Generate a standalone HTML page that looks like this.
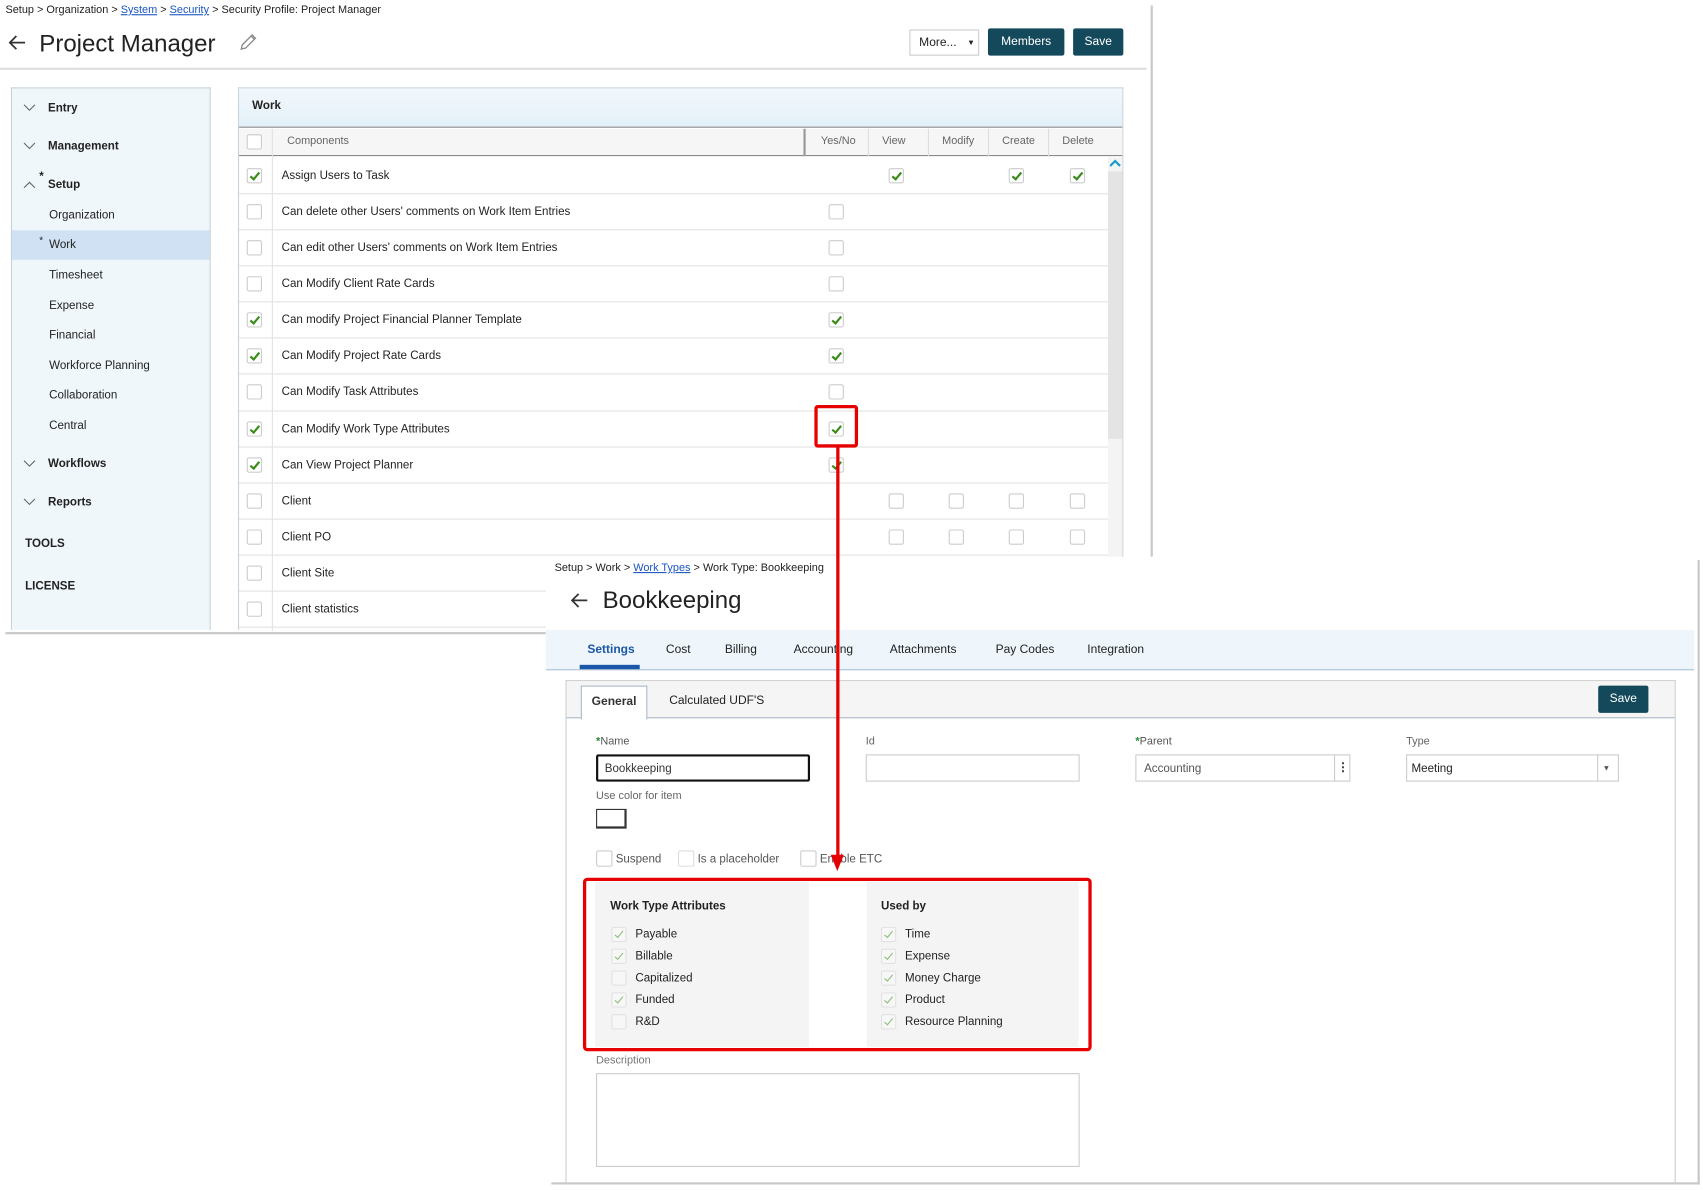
<!DOCTYPE html>
<html><head><meta charset="utf-8">
<style>
*{box-sizing:border-box;margin:0;padding:0}
html,body{width:1703px;height:1190px;overflow:hidden;background:#fff}
#w{position:absolute;left:0;top:0;width:1560px;height:1090px;transform:scale(1.09167);transform-origin:0 0;font-family:"Liberation Sans",sans-serif;color:#222;font-size:10.6px}
.a{position:absolute}
.t{position:absolute;white-space:nowrap;line-height:14px}
.cb{position:absolute;width:14px;height:14px;border:1px solid #ccc;border-radius:2px;background:#fff}
.cb.k::after{content:"";position:absolute;left:4px;top:1px;width:3px;height:7px;border:solid #3c8c1c;border-width:0 2px 2px 0;transform:rotate(40deg)}
.cb.l{background:#f7f7f7;border-color:#e2e2e2}
.cb.l.k::after{border-color:#8cbf7a;border-width:0 1.5px 1.5px 0}
.btn{position:absolute;background:#14495c;color:#fff;text-align:center;border-radius:2px;font-size:11px}
.hl{position:absolute;height:1px;background:#e2e2e2}
.ch{position:absolute}
a{color:#1a55c4;text-decoration:underline}
</style></head><body><div id="w">
<div class="a" style="left:1054px;top:5px;width:2px;height:505px;background:#c8c8c8"></div>
<div class="a" style="left:5px;top:579px;width:495px;height:2px;background:#c8c8c8"></div>
<div class="t" style="left:5px;top:3px;font-size:10px">Setup &gt; Organization &gt; <a>System</a> &gt; <a>Security</a> &gt; Security Profile: Project Manager</div>
<svg class="a" style="left:8px;top:32px" width="16" height="14" viewBox="0 0 16 14"><path d="M15 7H2M7 1L1 7L7 13" fill="none" stroke="#333" stroke-width="1.6"/></svg>
<div class="t" style="left:36px;top:26px;font-size:22px;line-height:28px;color:#222">Project Manager</div>
<svg class="a" style="left:218px;top:30px" width="18" height="18" viewBox="0 0 18 18"><path d="M3 15 L4 11 L13 2 L16 5 L7 14 Z M12 3 L15 6" fill="none" stroke="#888" stroke-width="1.2"/></svg>
<div class="a" style="left:833px;top:27px;width:64px;height:24px;border:1px solid #ccc;background:#fff"></div>
<div class="t" style="left:842px;top:32px;font-size:11px">More...</div>
<div class="t" style="left:886px;top:33px;font-size:7px">&#9660;</div>
<div class="btn" style="left:905px;top:26px;width:70px;height:25px;line-height:25px">Members</div>
<div class="btn" style="left:983px;top:26px;width:46px;height:25px;line-height:25px">Save</div>
<div class="a" style="left:0;top:62px;width:1050px;height:2px;background:#ddd"></div>
<div class="a" style="left:10px;top:80px;width:183px;height:497px;background:#f0f7fb;border:1px solid #c8d2da;border-bottom:none"></div>
<div class="a" style="left:11px;top:211px;width:181px;height:27px;background:#cfe1f3"></div>
<svg class="ch" style="left:21px;top:95px" width="12" height="8"><path d="M1 1L6 6L11 1" fill="none" stroke="#666"/></svg><div class="t" style="left:44px;top:92px;font-weight:bold">Entry</div>
<svg class="ch" style="left:21px;top:130px" width="12" height="8"><path d="M1 1L6 6L11 1" fill="none" stroke="#666"/></svg><div class="t" style="left:44px;top:127px;font-weight:bold">Management</div>
<svg class="ch" style="left:21px;top:165px" width="12" height="8"><path d="M1 7L6 2L11 7" fill="none" stroke="#666"/></svg><div class="t" style="left:36px;top:155px;font-weight:bold">*</div><div class="t" style="left:44px;top:162px;font-weight:bold">Setup</div>
<div class="t" style="left:45px;top:190px">Organization</div>
<div class="t" style="left:36px;top:213px;font-size:9px">*</div><div class="t" style="left:45px;top:217px">Work</div>
<div class="t" style="left:45px;top:245px">Timesheet</div>
<div class="t" style="left:45px;top:273px">Expense</div>
<div class="t" style="left:45px;top:300px">Financial</div>
<div class="t" style="left:45px;top:328px">Workforce Planning</div>
<div class="t" style="left:45px;top:355px">Collaboration</div>
<div class="t" style="left:45px;top:383px">Central</div>
<svg class="ch" style="left:21px;top:421px" width="12" height="8"><path d="M1 1L6 6L11 1" fill="none" stroke="#666"/></svg><div class="t" style="left:44px;top:418px;font-weight:bold">Workflows</div>
<svg class="ch" style="left:21px;top:456px" width="12" height="8"><path d="M1 1L6 6L11 1" fill="none" stroke="#666"/></svg><div class="t" style="left:44px;top:453px;font-weight:bold">Reports</div>
<div class="t" style="left:23px;top:491px;font-weight:bold">TOOLS</div>
<div class="t" style="left:23px;top:530px;font-weight:bold">LICENSE</div>
<div class="a" style="left:218px;top:80px;width:811px;height:497px;border:1px solid #c8d2da;border-bottom:none;background:#fff"></div>
<div class="a" style="left:219px;top:81px;width:809px;height:36px;background:linear-gradient(#f2f8fc,#e3f0f8);border-bottom:1px solid #888"></div>
<div class="t" style="left:231px;top:90px;font-weight:bold">Work</div>
<div class="a" style="left:219px;top:118px;width:809px;height:25px;background:#f6f6f6;border-bottom:1px solid #888"></div>
<div class="cb" style="left:226px;top:123px"></div>
<div class="a" style="left:249px;top:118px;width:1px;height:460px;background:#e2e2e2"></div>
<div class="a" style="left:736px;top:118px;width:2px;height:25px;background:#999"></div>
<div class="a" style="left:795px;top:118px;width:1px;height:25px;background:#ddd"></div>
<div class="a" style="left:850px;top:118px;width:1px;height:25px;background:#ddd"></div>
<div class="a" style="left:905px;top:118px;width:1px;height:25px;background:#ddd"></div>
<div class="a" style="left:960px;top:118px;width:1px;height:25px;background:#ddd"></div>
<div class="t" style="left:263px;top:123px;font-size:10px;color:#666">Components</div>
<div class="t" style="left:752px;top:123px;font-size:10px;color:#666">Yes/No</div>
<div class="t" style="left:808px;top:123px;font-size:10px;color:#666">View</div>
<div class="t" style="left:863px;top:123px;font-size:10px;color:#666">Modify</div>
<div class="t" style="left:918px;top:123px;font-size:10px;color:#666">Create</div>
<div class="t" style="left:973px;top:123px;font-size:10px;color:#666">Delete</div>
<div class="a" style="left:1015px;top:144px;width:13px;height:434px;background:#f4f4f4"></div>
<div class="a" style="left:1015px;top:157px;width:13px;height:245px;background:#e4e4e4"></div>
<svg class="a" style="left:1016px;top:146px" width="11" height="8"><path d="M1 6L5.5 1.5L10 6" fill="none" stroke="#1a9bc9" stroke-width="2"/></svg>
<div class="hl" style="left:219px;top:177px;width:796px"></div>
<div class="hl" style="left:219px;top:210px;width:796px"></div>
<div class="hl" style="left:219px;top:243px;width:796px"></div>
<div class="hl" style="left:219px;top:276px;width:796px"></div>
<div class="hl" style="left:219px;top:309px;width:796px"></div>
<div class="hl" style="left:219px;top:342px;width:796px"></div>
<div class="hl" style="left:219px;top:376px;width:796px"></div>
<div class="hl" style="left:219px;top:409px;width:796px"></div>
<div class="hl" style="left:219px;top:442px;width:796px"></div>
<div class="hl" style="left:219px;top:475px;width:796px"></div>
<div class="hl" style="left:219px;top:508px;width:796px"></div>
<div class="hl" style="left:219px;top:541px;width:796px"></div>
<div class="hl" style="left:219px;top:574px;width:796px"></div>
<div class="cb k" style="left:226px;top:154px"></div><div class="t" style="left:258px;top:154px">Assign Users to Task</div>
<div class="cb k" style="left:814px;top:154px"></div><div class="cb k" style="left:924px;top:154px"></div><div class="cb k" style="left:980px;top:154px"></div>
<div class="cb" style="left:226px;top:187px"></div><div class="t" style="left:258px;top:187px">Can delete other Users' comments on Work Item Entries</div><div class="cb" style="left:759px;top:187px"></div>
<div class="cb" style="left:226px;top:220px"></div><div class="t" style="left:258px;top:220px">Can edit other Users' comments on Work Item Entries</div><div class="cb" style="left:759px;top:220px"></div>
<div class="cb" style="left:226px;top:253px"></div><div class="t" style="left:258px;top:253px">Can Modify Client Rate Cards</div><div class="cb" style="left:759px;top:253px"></div>
<div class="cb k" style="left:226px;top:286px"></div><div class="t" style="left:258px;top:286px">Can modify Project Financial Planner Template</div><div class="cb k" style="left:759px;top:286px"></div>
<div class="cb k" style="left:226px;top:319px"></div><div class="t" style="left:258px;top:319px">Can Modify Project Rate Cards</div><div class="cb k" style="left:759px;top:319px"></div>
<div class="cb" style="left:226px;top:352px"></div><div class="t" style="left:258px;top:352px">Can Modify Task Attributes</div><div class="cb" style="left:759px;top:352px"></div>
<div class="cb k" style="left:226px;top:386px"></div><div class="t" style="left:258px;top:386px">Can Modify Work Type Attributes</div><div class="cb k" style="left:759px;top:386px"></div>
<div class="cb k" style="left:226px;top:419px"></div><div class="t" style="left:258px;top:419px">Can View Project Planner</div><div class="cb k" style="left:759px;top:419px"></div>
<div class="cb" style="left:226px;top:452px"></div><div class="t" style="left:258px;top:452px">Client</div>
<div class="cb" style="left:814px;top:452px"></div><div class="cb" style="left:869px;top:452px"></div><div class="cb" style="left:924px;top:452px"></div><div class="cb" style="left:980px;top:452px"></div>
<div class="cb" style="left:226px;top:485px"></div><div class="t" style="left:258px;top:485px">Client PO</div>
<div class="cb" style="left:814px;top:485px"></div><div class="cb" style="left:869px;top:485px"></div><div class="cb" style="left:924px;top:485px"></div><div class="cb" style="left:980px;top:485px"></div>
<div class="cb" style="left:226px;top:518px"></div><div class="t" style="left:258px;top:518px">Client Site</div>
<div class="cb" style="left:226px;top:551px"></div><div class="t" style="left:258px;top:551px">Client statistics</div>
<div class="a" style="left:746px;top:371px;width:40px;height:39px;border:3px solid #e60000;border-radius:3px"></div>
<div class="a" style="left:500px;top:510px;width:1056px;height:575px;background:#fff"></div>
<div class="a" style="left:1555px;top:513px;width:2px;height:572px;background:#c8c8c8"></div>
<div class="a" style="left:505px;top:1083px;width:1052px;height:2px;background:#c8c8c8"></div>
<div class="t" style="left:508px;top:514px;font-size:10px">Setup &gt; Work &gt; <a>Work Types</a> &gt; Work Type: Bookkeeping</div>
<svg class="a" style="left:523px;top:543px" width="16" height="14" viewBox="0 0 16 14"><path d="M15 7H2M7 1L1 7L7 13" fill="none" stroke="#333" stroke-width="1.6"/></svg>
<div class="t" style="left:552px;top:536px;font-size:22px;line-height:28px">Bookkeeping</div>
<div class="a" style="left:500px;top:577px;width:1052px;height:37px;background:#eef6fb;border-bottom:1px solid #aac0d6"></div>
<div class="a" style="left:531px;top:609px;width:55px;height:4px;background:#1a57a8"></div>
<div class="t" style="left:538px;top:588px;color:#1a57a8;font-weight:bold;font-size:11px">Settings</div>
<div class="t" style="left:610px;top:588px;font-size:11px">Cost</div>
<div class="t" style="left:664px;top:588px;font-size:11px">Billing</div>
<div class="t" style="left:727px;top:588px;font-size:11px">Accounting</div>
<div class="t" style="left:815px;top:588px;font-size:11px">Attachments</div>
<div class="t" style="left:912px;top:588px;font-size:11px">Pay Codes</div>
<div class="t" style="left:996px;top:588px;font-size:11px">Integration</div>
<div class="a" style="left:518px;top:623px;width:1017px;height:460px;border:1px solid #ccc;border-bottom:none"></div>
<div class="a" style="left:519px;top:624px;width:1015px;height:34px;background:#f5f5f5;border-bottom:1px solid #aab8c8"></div>
<div class="a" style="left:532px;top:628px;width:61px;height:31px;background:#fff;border:1px solid #aab8c8;border-bottom:none"></div>
<div class="t" style="left:542px;top:636px;font-weight:bold;color:#333;font-size:11px">General</div>
<div class="t" style="left:613px;top:635px;font-size:11px">Calculated UDF'S</div>
<div class="btn" style="left:1464px;top:628px;width:46px;height:25px;line-height:25px">Save</div>
<div class="t" style="left:546px;top:673px;font-size:10px;color:#555"><span style="color:#2a8a3a;font-weight:bold">*</span>Name</div>
<div class="a" style="left:546px;top:691px;width:196px;height:25px;border:2px solid #111;border-radius:2px"></div>
<div class="t" style="left:554px;top:697px;color:#333">Bookkeeping</div>
<div class="t" style="left:793px;top:673px;font-size:10px;color:#666">Id</div>
<div class="a" style="left:793px;top:691px;width:196px;height:25px;border:1px solid #ccc"></div>
<div class="t" style="left:1040px;top:673px;font-size:10px;color:#555"><span style="color:#2a8a3a;font-weight:bold">*</span>Parent</div>
<div class="a" style="left:1040px;top:691px;width:197px;height:25px;border:1px solid #ccc"></div>
<div class="a" style="left:1222px;top:691px;width:1px;height:25px;background:#ccc"></div>
<div class="t" style="left:1048px;top:697px;color:#555">Accounting</div>
<div class="t" style="left:1225px;top:696px;font-weight:bold">&#8942;</div>
<div class="t" style="left:1288px;top:673px;font-size:10px;color:#666">Type</div>
<div class="a" style="left:1288px;top:691px;width:195px;height:25px;border:1px solid #ccc"></div>
<div class="a" style="left:1463px;top:691px;width:1px;height:25px;background:#ccc"></div>
<div class="t" style="left:1293px;top:697px">Meeting</div>
<div class="t" style="left:1468px;top:698px;font-size:7px;color:#555">&#9660;</div>
<div class="t" style="left:546px;top:723px;font-size:10px;color:#666">Use color for item</div>
<div class="a" style="left:546px;top:741px;width:28px;height:18px;border:1px solid #333;border-right-width:2px;border-bottom-width:2px"></div>
<div class="cb" style="left:546px;top:779px;width:15px;height:15px"></div><div class="t" style="left:564px;top:780px;color:#555">Suspend</div>
<div class="cb" style="left:621px;top:779px;width:15px;height:15px;border-color:#ddd"></div><div class="t" style="left:639px;top:780px;color:#555">Is a placeholder</div>
<div class="cb" style="left:733px;top:779px;width:15px;height:15px"></div><div class="t" style="left:751px;top:780px;color:#555">Enable ETC</div>
<div class="a" style="left:545px;top:808px;width:196px;height:151px;background:#f4f4f4"></div>
<div class="a" style="left:794px;top:808px;width:194px;height:151px;background:#f4f4f4"></div>
<div class="a" style="left:534px;top:804px;width:466px;height:159px;border:3px solid #e60000;border-radius:4px"></div>
<div class="t" style="left:559px;top:823px;font-weight:bold">Work Type Attributes</div>
<div class="cb l k" style="left:560px;top:849px"></div><div class="t" style="left:582px;top:849px">Payable</div>
<div class="cb l k" style="left:560px;top:869px"></div><div class="t" style="left:582px;top:869px">Billable</div>
<div class="cb l" style="left:560px;top:889px"></div><div class="t" style="left:582px;top:889px">Capitalized</div>
<div class="cb l k" style="left:560px;top:909px"></div><div class="t" style="left:582px;top:909px">Funded</div>
<div class="cb l" style="left:560px;top:929px"></div><div class="t" style="left:582px;top:929px">R&amp;D</div>
<div class="t" style="left:807px;top:823px;font-weight:bold">Used by</div>
<div class="cb l k" style="left:807px;top:849px"></div><div class="t" style="left:829px;top:849px">Time</div>
<div class="cb l k" style="left:807px;top:869px"></div><div class="t" style="left:829px;top:869px">Expense</div>
<div class="cb l k" style="left:807px;top:889px"></div><div class="t" style="left:829px;top:889px">Money Charge</div>
<div class="cb l k" style="left:807px;top:909px"></div><div class="t" style="left:829px;top:909px">Product</div>
<div class="cb l k" style="left:807px;top:929px"></div><div class="t" style="left:829px;top:929px">Resource Planning</div>
<div class="t" style="left:546px;top:965px;font-size:10px;color:#777">Description</div>
<div class="a" style="left:546px;top:983px;width:443px;height:86px;border:1px solid #ccc"></div>
<div class="a" style="left:766px;top:409px;width:3px;height:378px;background:#e60000"></div>
<div class="a" style="left:761px;top:783px;width:0;height:0;border-left:6.5px solid transparent;border-right:6.5px solid transparent;border-top:15px solid #e60000"></div>
</div></body></html>
